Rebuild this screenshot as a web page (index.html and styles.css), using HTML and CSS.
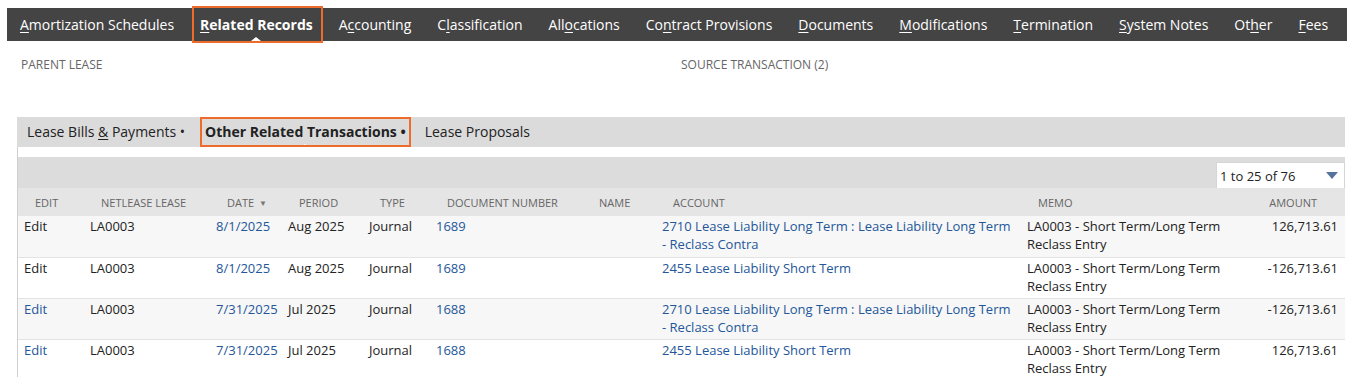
FILE: index.html
```html
<!DOCTYPE html>
<html>
<head>
<meta charset="utf-8">
<link rel="stylesheet" href="styles.css">
</head>
<body>
<nav class="nav">
  <span class="nav-item"><u>A</u>mortization Schedules</span>
  <span class="nav-item active"><u>R</u>elated Records</span>
  <span class="nav-item">A<u>c</u>counting</span>
  <span class="nav-item">C<u>l</u>assification</span>
  <span class="nav-item">All<u>o</u>cations</span>
  <span class="nav-item">Co<u>n</u>tract Provisions</span>
  <span class="nav-item"><u>D</u>ocuments</span>
  <span class="nav-item"><u>M</u>odifications</span>
  <span class="nav-item"><u>T</u>ermination</span>
  <span class="nav-item"><u>S</u>ystem Notes</span>
  <span class="nav-item">Ot<u>h</u>er</span>
  <span class="nav-item"><u>F</u>ees</span>
</nav>

<div class="fields">
  <div class="field field-parent">PARENT LEASE</div>
  <div class="field">SOURCE TRANSACTION (2)</div>
</div>

<section class="subtabs-wrap">
  <div class="subtabs">
    <span class="subtab">Lease Bills <u>&amp;</u> Payments <span class="dot">•</span></span>
    <span class="subtab active">Other Related Transactions <span class="dot">•</span></span>
    <span class="subtab">Lease Proposals</span>
  </div>
  <div class="panel">
    <div class="toolbar">
      <div class="pager">
        <span>1 to 25 of 76</span>
        <span class="pager-arrow"></span>
      </div>
    </div>
    <table class="grid">
      <colgroup>
        <col class="c-edit"><col class="c-lease"><col class="c-date"><col class="c-period"><col class="c-type"><col class="c-doc"><col class="c-name"><col class="c-account"><col class="c-memo"><col class="c-amount">
      </colgroup>
      <thead>
        <tr>
          <th>EDIT</th>
          <th>NETLEASE LEASE</th>
          <th>DATE <span class="sort">▼</span></th>
          <th>PERIOD</th>
          <th>TYPE</th>
          <th>DOCUMENT NUMBER</th>
          <th>NAME</th>
          <th>ACCOUNT</th>
          <th>MEMO</th>
          <th class="num">AMOUNT</th>
        </tr>
      </thead>
      <tbody>
        <tr class="odd">
          <td>Edit</td>
          <td>LA0003</td>
          <td class="link">8/1/2025</td>
          <td>Aug 2025</td>
          <td>Journal</td>
          <td class="link">1689</td>
          <td></td>
          <td class="link">2710 Lease Liability Long Term : Lease Liability Long Term - Reclass Contra</td>
          <td>LA0003 - Short Term/Long Term Reclass Entry</td>
          <td class="num">126,713.61</td>
        </tr>
        <tr>
          <td>Edit</td>
          <td>LA0003</td>
          <td class="link">8/1/2025</td>
          <td>Aug 2025</td>
          <td>Journal</td>
          <td class="link">1689</td>
          <td></td>
          <td class="link">2455 Lease Liability Short Term</td>
          <td>LA0003 - Short Term/Long Term Reclass Entry</td>
          <td class="num">-126,713.61</td>
        </tr>
        <tr class="odd">
          <td class="link">Edit</td>
          <td>LA0003</td>
          <td class="link">7/31/2025</td>
          <td>Jul 2025</td>
          <td>Journal</td>
          <td class="link">1688</td>
          <td></td>
          <td class="link">2710 Lease Liability Long Term : Lease Liability Long Term - Reclass Contra</td>
          <td>LA0003 - Short Term/Long Term Reclass Entry</td>
          <td class="num">-126,713.61</td>
        </tr>
        <tr>
          <td class="link">Edit</td>
          <td>LA0003</td>
          <td class="link">7/31/2025</td>
          <td>Jul 2025</td>
          <td>Journal</td>
          <td class="link">1688</td>
          <td></td>
          <td class="link">2455 Lease Liability Short Term</td>
          <td>LA0003 - Short Term/Long Term Reclass Entry</td>
          <td class="num">126,713.61</td>
        </tr>
      </tbody>
    </table>
  </div>
</section>
</body>
</html>
```

FILE: styles.css
```css
* { box-sizing: border-box; }
body {
  margin: 0;
  font-family: "Open Sans", "Noto Sans", sans-serif;
  color: #222;
  background: #fff;
  overflow: hidden;
}
u { text-decoration: underline; text-underline-offset: 2px; }

.nav {
  margin: 8px 0 0 7px;
  height: 33px;
  background: #444444;
  display: flex;
  align-items: center;
}
.nav-item {
  position: relative;
  height: 33px;
  line-height: 33px;
  padding: 0 13px 0 13px;
  color: #fff;
  font-size: 14px;
  white-space: nowrap;
}
.nav-item.active { font-weight: 700; }
.nav-item.active::after {
  content: "";
  position: absolute;
  left: 5px; right: 3px; top: -2px; bottom: -2px;
  border: 2.5px solid #ee6b2b;
}
.nav-item.active::before {
  content: "";
  position: absolute;
  left: 50%;
  bottom: 0;
  margin-left: -5px;
  border-left: 5px solid transparent;
  border-right: 5px solid transparent;
  border-bottom: 4px solid #fff;
}

.fields {
  display: flex;
  padding: 16px 0 0 21px;
  height: 76px;
}
.field {
  font-size: 12px;
  color: #666;
  line-height: 16px;
}
.field-parent { width: 660px; }

.subtabs-wrap {
  margin: 0 2px 0 17px;
}
.subtabs {
  display: flex;
  height: 30px;
  background: #dbdbdb;
  padding-left: 0;
}
.subtab {
  position: relative;
  padding: 0 10px;
  line-height: 30px;
  font-size: 14px;
  color: #222;
  white-space: nowrap;
}
.subtab .dot { font-size: 14px; }
.subtab.active { font-weight: 700; padding-right: 9px; }
.subtab.active::after {
  content: "";
  position: absolute;
  left: 5px; right: 4px; top: 0; bottom: 0;
  border: 2.5px solid #ee6b2b;
}
.subtab.active::before {
  content: "";
  position: absolute;
  left: 50%;
  bottom: 0;
  margin-left: -4px;
  border-left: 4px solid transparent;
  border-right: 4px solid transparent;
  border-bottom: 3px solid #fff;
}

.panel {
  border-left: 1px solid #cfcfcf;
  padding-top: 10px;
}
.toolbar {
  height: 31px;
  background: #dcdcdc;
  display: flex;
  justify-content: flex-end;
  align-items: flex-end;
}
.pager {
  width: 129px;
  height: 26px;
  background: #fff;
  border: 1px solid #d5d5d5;
  border-bottom: 0;
  display: flex;
  align-items: center;
  justify-content: space-between;
  padding: 0 6px 0 3px;
  font-size: 13px;
  color: #222;
}
.pager-arrow {
  width: 0; height: 0;
  border-left: 6px solid transparent;
  border-right: 6px solid transparent;
  border-top: 7px solid #56719b;
}

.grid {
  width: 100%;
  table-layout: fixed;
  border-collapse: collapse;
  font-size: 13px;
}
.c-edit { width: 66px; }
.c-lease { width: 126px; }
.c-date { width: 72px; }
.c-period { width: 81px; }
.c-type { width: 67px; }
.c-doc { width: 152px; }
.c-name { width: 74px; }
.c-account { width: 365px; }
.c-memo { width: 209px; }
.c-amount { width: auto; }

.grid th {
  background: #e5e5e5;
  height: 28px;
  padding: 0 0 0 17px;
  font-size: 11px;
  font-weight: 400;
  color: #666;
  text-align: left;
  white-space: nowrap;
}
.grid th.num { text-align: right; padding-right: 28px; }
.grid th .sort { font-size: 8px; color: #777; margin-left: 2px; vertical-align: 1px; }

.grid td {
  padding: 1px 6px 3px 6px;
  line-height: 18px;
  vertical-align: top;
  color: #222;
  border-bottom: 1px solid #e3e3e3;
  height: 41px;
}
.grid tr.odd td { background: #f7f7f7; }
.grid td.link { color: #24569a; }
.grid td.num { text-align: right; padding-right: 7px; }
```
